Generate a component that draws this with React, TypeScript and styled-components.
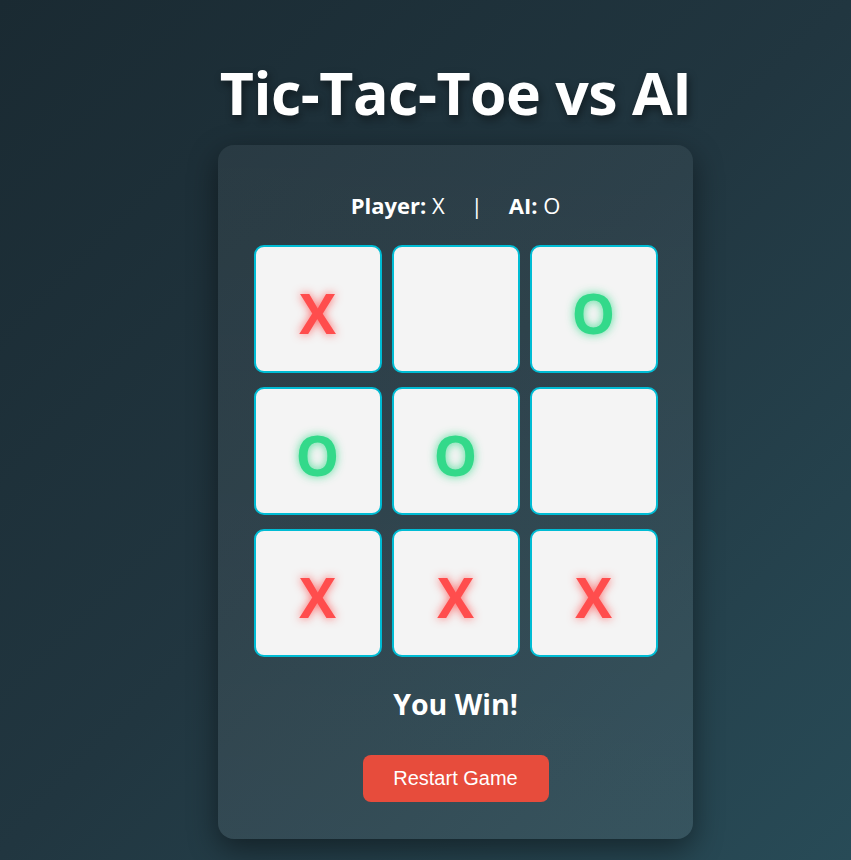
import React from "react";
import styled, { createGlobalStyle } from "styled-components";

const GlobalStyle = createGlobalStyle`
  html, body {
    margin: 0;
    padding: 0;
  }
  body {
    min-height: 860px;
    background: linear-gradient(135deg, #1a2a32 0%, #213640 50%, #284b57 100%);
    font-family: "Open Sans", "Noto Sans", sans-serif;
    color: #ffffff;
  }
`;

const Page = styled.div`
  min-height: 860px;
  padding-left: 60px;
  display: flex;
  flex-direction: column;
  align-items: center;
  box-sizing: border-box;
`;

const Title = styled.h1`
  margin: 57px 0 17px;
  font-family: "Open Sans", "Noto Sans", sans-serif;
  font-size: 59px;
  font-weight: 700;
  line-height: 1.2;
  letter-spacing: -0.5px;
  color: #ffffff;
  text-shadow: 2px 4px 8px rgba(0, 0, 0, 0.45);
`;

const Card = styled.div`
  width: 475px;
  box-sizing: border-box;
  padding: 44px 37px 37px;
  border-radius: 16px;
  background: linear-gradient(180deg, rgba(255, 255, 255, 0.055), rgba(255, 255, 255, 0.075));
  box-shadow: 0 10px 30px rgba(0, 0, 0, 0.45);
  display: flex;
  flex-direction: column;
  align-items: center;
`;

const Status = styled.div`
  display: flex;
  align-items: center;
  gap: 26px;
  font-size: 22px;
  line-height: 33px;
  margin-bottom: 23px;
`;

const Label = styled.span`
  font-weight: 700;
`;

const Value = styled.span`
  font-weight: 400;
`;

const Divider = styled.span`
  font-weight: 400;
`;

const Board = styled.div`
  display: grid;
  grid-template-columns: repeat(3, 128px);
  grid-auto-rows: 128px;
  column-gap: 10px;
  row-gap: 14px;
`;

const Cell = styled.div<{ $mark: "X" | "O" | "" }>`
  box-sizing: border-box;
  background: #f4f4f4;
  border: 2px solid #00bcd4;
  border-radius: 10px;
  display: flex;
  align-items: center;
  justify-content: center;
  padding-top: 8px;
  font-family: "Open Sans", "Noto Sans", sans-serif;
  font-size: 55px;
  font-weight: 700;
  color: ${(p) => (p.$mark === "X" ? "#ff4d4d" : "#33d98a")};
  text-shadow: 0 0 10px
    ${(p) => (p.$mark === "X" ? "rgba(255, 77, 77, 0.85)" : "rgba(51, 217, 138, 0.85)")};
`;

const Result = styled.h2`
  margin: 29px 0 33px;
  font-size: 28.5px;
  font-weight: 700;
  line-height: 36px;
`;

const RestartButton = styled.button`
  width: 186px;
  height: 47px;
  border: none;
  border-radius: 8px;
  background: #e74c3c;
  color: #ffffff;
  font-family: "Liberation Sans", Arial, sans-serif;
  font-size: 20px;
  cursor: pointer;
`;

const board: Array<"X" | "O" | ""> = ["X", "", "O", "O", "O", "", "X", "X", "X"];

export default function App() {
  return (
    <>
      <GlobalStyle />
      <Page>
        <Title>Tic-Tac-Toe vs AI</Title>
        <Card>
          <Status>
            <span>
              <Label>Player:</Label> <Value>X</Value>
            </span>
            <Divider>|</Divider>
            <span>
              <Label>AI:</Label> <Value>O</Value>
            </span>
          </Status>
          <Board>
            {board.map((m, i) => (
              <Cell key={i} $mark={m}>
                {m}
              </Cell>
            ))}
          </Board>
          <Result>You Win!</Result>
          <RestartButton>Restart Game</RestartButton>
        </Card>
      </Page>
    </>
  );
}
